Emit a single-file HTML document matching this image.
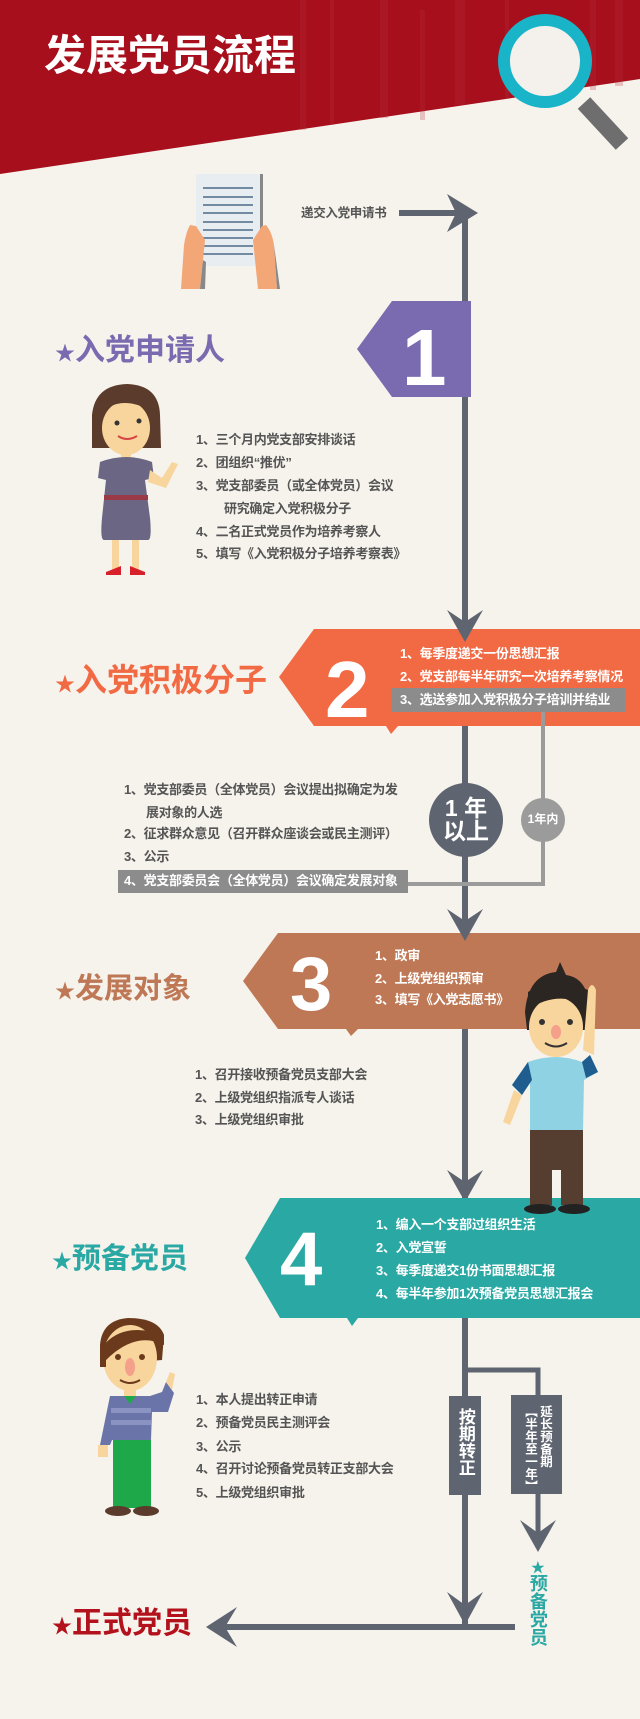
<!DOCTYPE html>
<html><head><meta charset="utf-8">
<style>
html,body{margin:0;padding:0;}
body{width:640px;height:1719px;position:relative;overflow:hidden;background:#f6f2ec;font-family:"Liberation Sans","Noto Sans CJK SC",sans-serif;}
svg{position:absolute;left:0;top:0;}
.t{position:absolute;white-space:nowrap;font-weight:bold;font-size:13px;line-height:16px;color:#555;letter-spacing:-0.3px;}
.w{color:#fff;}
.h{position:absolute;white-space:nowrap;font-weight:bold;line-height:1;}
.box{position:absolute;background:#8c8c8c;}
.v{position:absolute;writing-mode:vertical-rl;font-weight:bold;color:#fff;line-height:1.05;}
</style></head><body>
<svg width="640" height="1719" viewBox="0 0 640 1719">
  <polygon points="0,0 640,0 640,79 0,174" fill="#a70f1c"/>
  <g fill="#b8323c" opacity="0.25">
    <rect x="300" y="0" width="6" height="130"/>
    <rect x="330" y="0" width="4" height="125"/>
    <rect x="380" y="0" width="8" height="118"/>
    <rect x="420" y="10" width="5" height="110"/>
    <rect x="455" y="0" width="10" height="105"/>
    <rect x="505" y="0" width="4" height="98"/>
    <rect x="590" y="0" width="6" height="90"/>
    <rect x="615" y="0" width="8" height="86"/>
  </g>
  <line x1="584" y1="103" x2="622" y2="144" stroke="#6e6e6e" stroke-width="17"/>
  <circle cx="545" cy="61" r="41" fill="#f4f1ec" stroke="#19b4c8" stroke-width="12"/>

  <rect x="196" y="174" width="64" height="92" fill="#e8edf1"/>
  <rect x="260" y="174" width="3" height="60" fill="#888"/>
  <g stroke="#4b6a88" stroke-width="1.6">
    <line x1="203" y1="188" x2="253" y2="188"/><line x1="203" y1="197" x2="253" y2="197"/>
    <line x1="203" y1="205" x2="253" y2="205"/><line x1="203" y1="213" x2="253" y2="213"/>
    <line x1="203" y1="222" x2="253" y2="222"/><line x1="203" y1="230" x2="253" y2="230"/>
    <line x1="203" y1="238" x2="253" y2="238"/><line x1="203" y1="246" x2="253" y2="246"/>
    <line x1="203" y1="254" x2="253" y2="254"/>
  </g>
  <path d="M190,225 Q186,232 184,245 L181,289 L200,289 L203,260 L205,240 Q200,232 196,226 Z" fill="#f3a777"/>
  <path d="M203,260 L200,289 L205,289 L206,262 Z" fill="#888"/>
  <path d="M266,225 Q272,232 274,245 L277,289 L258,289 L255,260 L253,240 Q258,232 262,226 Z" fill="#f3a777"/>
  <path d="M274,245 L280,289 L277,289 Z" fill="#888"/>

  <line x1="465" y1="213" x2="465" y2="1627" stroke="#5e6570" stroke-width="6"/>
  <line x1="399" y1="213" x2="470" y2="213" stroke="#5e6570" stroke-width="6"/>
  <polygon points="478,213 447,194 456,213 447,232" fill="#5e6570"/>

  <polygon points="392,301 471,301 471,397 392,397 357,349" fill="#7a6aaf"/>
  <polygon points="314,629 640,629 640,726 314,726 279,677" fill="#f26a43"/>
  <polygon points="386,726 398,726 391,734" fill="#f26a43"/>
  <polygon points="465,642 447,610 465,622 483,610" fill="#5e6570"/>

  <line x1="543" y1="712" x2="543" y2="886" stroke="#9b9b9b" stroke-width="4"/>
  <line x1="406" y1="884" x2="545" y2="884" stroke="#9b9b9b" stroke-width="4"/>

  <circle cx="466" cy="820" r="37" fill="#5e6570"/>
  <circle cx="543" cy="820" r="22" fill="#9b9b9b"/>

  <polygon points="278,933 640,933 640,1029 278,1029 243,981" fill="#be7855"/>
  <polygon points="346,1029 358,1029 351,1036" fill="#be7855"/>
  <polygon points="465,941 447,909 465,921 483,909" fill="#5e6570"/>

  <polygon points="465,1202 447,1170 465,1182 483,1170" fill="#5e6570"/>
  <polygon points="280,1198 640,1198 640,1318 280,1318 245,1258" fill="#2aa8a3"/>
  <polygon points="347,1318 358,1318 352,1326" fill="#2aa8a3"/>

  <polyline points="465,1370 538,1370 538,1548" fill="none" stroke="#5e6570" stroke-width="5"/>
  <rect x="449" y="1396" width="32" height="99" fill="#5e6570"/>
  <rect x="511" y="1395" width="51" height="99" fill="#5e6570"/>
  <polygon points="538,1552 520,1520 538,1533 556,1520" fill="#5e6570"/>

  <polygon points="465,1625 447,1592 465,1605 483,1592" fill="#5e6570"/>
  <line x1="212" y1="1627" x2="515" y2="1627" stroke="#5e6570" stroke-width="6"/>
  <polygon points="206,1627 237,1607 225,1627 237,1647" fill="#5e6570"/>

  <g>
    <path d="M92,415 Q95,385 127,384 Q159,385 160,415 L161,448 L92,448 Z" fill="#5b3b2b"/>
    <ellipse cx="126" cy="428" rx="24" ry="27" fill="#f8d59c"/>
    <path d="M103,412 Q120,395 150,410 L150,400 Q128,388 103,400 Z" fill="#5b3b2b"/>
    <circle cx="117" cy="423" r="2.5" fill="#333"/><circle cx="139" cy="421" r="2.5" fill="#333"/>
    <path d="M118,436 Q127,442 137,436" stroke="#d84545" stroke-width="2" fill="none"/>
    <rect x="121" y="452" width="10" height="8" fill="#f8d59c"/>
    <path d="M100,462 Q126,452 152,462 L154,478 L145,480 L150,518 Q152,540 148,540 L104,540 Q100,540 102,518 L106,480 L98,478 Z" fill="#6a6683"/>
    <rect x="104" y="495" width="44" height="5" fill="#9a3a46"/>
    <path d="M150,470 L162,478 L172,462 L178,464 L166,488 L148,482 Z" fill="#f8d59c"/>
    <rect x="112" y="540" width="7" height="30" fill="#f8d59c"/><rect x="132" y="540" width="7" height="30" fill="#f8d59c"/>
    <path d="M106,572 L121,566 L121,575 L106,575 Z" fill="#d8202a"/><path d="M130,566 L145,572 L145,575 L130,575 Z" fill="#d8202a"/>
  </g>

  <g>
    <path d="M525,1012 Q528,975 556,972 L560,962 L566,975 Q588,978 590,1010 L588,1030 L527,1030 Z" fill="#2c2622"/>
    <ellipse cx="556" cy="1027" rx="27" ry="30" fill="#f8d59c"/>
    <path d="M528,1010 Q555,990 588,1005 L588,990 Q556,975 528,992 Z" fill="#2c2622"/>
    <circle cx="542" cy="1022" r="3" fill="#333"/><circle cx="570" cy="1022" r="3" fill="#333"/>
    <ellipse cx="556" cy="1032" rx="5" ry="7" fill="#f5a08a"/>
    <path d="M545,1043 Q556,1050 567,1043" stroke="#333" stroke-width="2" fill="none"/>
    <path d="M583,1050 L588,990 Q592,980 596,990 L594,1055 Z" fill="#f8d59c"/>
    <path d="M528,1062 Q556,1052 582,1062 L590,1055 L598,1072 L584,1080 L583,1130 L530,1130 L530,1082 L522,1095 L512,1085 Z" fill="#8fd2e4"/>
    <path d="M582,1062 L590,1055 L598,1072 L586,1078 Z" fill="#1f5d8e"/>
    <path d="M528,1062 L512,1085 L522,1095 L532,1080 Z" fill="#1f5d8e"/>
    <path d="M514,1090 L522,1095 L510,1125 L503,1122 Z" fill="#f8d59c"/>
    <rect x="530" y="1130" width="53" height="40" fill="#553d2f"/>
    <rect x="530" y="1168" width="22" height="37" fill="#553d2f"/><rect x="561" y="1168" width="22" height="37" fill="#553d2f"/>
    <ellipse cx="540" cy="1209" rx="16" ry="5" fill="#222"/><ellipse cx="574" cy="1209" rx="16" ry="5" fill="#222"/>
  </g>

  <g>
    <path d="M100,1345 Q102,1320 128,1318 Q158,1318 164,1335 L162,1360 L100,1365 Z" fill="#6b3a1c"/>
    <ellipse cx="130" cy="1358" rx="27" ry="33" fill="#f8d59c"/>
    <path d="M100,1350 Q120,1320 164,1335 L164,1345 Q135,1330 104,1362 Z" fill="#6b3a1c"/>
    <rect x="100" y="1345" width="6" height="22" fill="#6b3a1c"/>
    <circle cx="118" cy="1357" r="3" fill="#6b3a1c"/><circle cx="142" cy="1357" r="3" fill="#6b3a1c"/>
    <ellipse cx="130" cy="1367" rx="5" ry="9" fill="#f5a08a"/>
    <path d="M120,1380 Q130,1386 140,1380" stroke="#6b3a1c" stroke-width="2" fill="none"/>
    <rect x="124" y="1388" width="12" height="8" fill="#f8d59c"/>
    <path d="M110,1396 L150,1396 L162,1392 L166,1382 L174,1393 L168,1412 L152,1412 L151,1440 L112,1440 L110,1445 L100,1445 Z" fill="#6b74a8"/>
    <rect x="111" y="1408" width="40" height="5" fill="#8a93c2"/><rect x="111" y="1420" width="40" height="5" fill="#8a93c2"/>
    <path d="M124,1396 L136,1396 L130,1404 Z" fill="#1fa84a"/>
    <path d="M166,1382 L170,1372 L175,1374 L172,1390 Z" fill="#f8d59c"/>
    <rect x="98" y="1445" width="10" height="12" fill="#f8d59c"/>
    <rect x="113" y="1440" width="38" height="68" fill="#1fa84a"/>
    <ellipse cx="118" cy="1511" rx="13" ry="5" fill="#5b3b2b"/><ellipse cx="146" cy="1511" rx="13" ry="5" fill="#5b3b2b"/>
  </g>
</svg>

<div class="h" style="left:44px;top:35px;font-size:42px;color:#fff;">发展党员流程</div>
<div class="t" style="left:301px;top:205px;font-size:12.5px;">递交入党申请书</div>

<div class="h" style="left:402px;top:318px;font-size:80px;color:#fff;">1</div>
<div class="h" style="left:55px;top:336px;font-size:30px;color:#7a6aaf;"><span style="font-size:20px;">★</span>入党申请人</div>
<div class="t" style="left:196px;top:432px;">1、三个月内党支部安排谈话</div>
<div class="t" style="left:196px;top:455px;">2、团组织“推优”</div>
<div class="t" style="left:196px;top:478px;">3、党支部委员（或全体党员）会议</div>
<div class="t" style="left:224px;top:501px;">研究确定入党积极分子</div>
<div class="t" style="left:196px;top:524px;">4、二名正式党员作为培养考察人</div>
<div class="t" style="left:196px;top:546px;">5、填写《入党积极分子培养考察表》</div>

<div class="h" style="left:325px;top:650px;font-size:80px;color:#fff;">2</div>
<div class="h" style="left:55px;top:664px;font-size:32px;color:#f26a43;"><span style="font-size:20px;">★</span>入党积极分子</div>
<div class="t w" style="left:400px;top:646px;">1、每季度递交一份思想汇报</div>
<div class="t w" style="left:400px;top:669px;">2、党支部每半年研究一次培养考察情况</div>
<div class="box" style="left:391px;top:688px;width:234px;height:24px;"></div>
<div class="t w" style="left:400px;top:692px;">3、选送参加入党积极分子培训并结业</div>

<div class="t" style="left:124px;top:782px;">1、党支部委员（全体党员）会议提出拟确定为发</div>
<div class="t" style="left:146px;top:805px;">展对象的人选</div>
<div class="t" style="left:124px;top:826px;">2、征求群众意见（召开群众座谈会或民主测评）</div>
<div class="t" style="left:124px;top:849px;">3、公示</div>
<div class="box" style="left:118px;top:870px;width:290px;height:23px;"></div>
<div class="t w" style="left:124px;top:873px;">4、党支部委员会（全体党员）会议确定发展对象</div>

<div class="h" style="left:443px;top:797px;font-size:23px;color:#fff;line-height:23px;text-align:center;width:46px;">1 年<br>以上</div>
<div class="h" style="left:523px;top:813px;font-size:12px;color:#fff;width:40px;text-align:center;">1年内</div>

<div class="h" style="left:290px;top:947px;font-size:76px;color:#fff;">3</div>
<div class="h" style="left:55px;top:975px;font-size:29px;color:#be7855;"><span style="font-size:20px;">★</span>发展对象</div>
<div class="t w" style="left:375px;top:948px;">1、政审</div>
<div class="t w" style="left:375px;top:971px;">2、上级党组织预审</div>
<div class="t w" style="left:375px;top:992px;">3、填写《入党志愿书》</div>

<div class="t" style="left:195px;top:1067px;">1、召开接收预备党员支部大会</div>
<div class="t" style="left:195px;top:1090px;">2、上级党组织指派专人谈话</div>
<div class="t" style="left:195px;top:1112px;">3、上级党组织审批</div>

<div class="h" style="left:280px;top:1222px;font-size:76px;color:#fff;">4</div>
<div class="h" style="left:52px;top:1245px;font-size:29px;color:#2aa8a3;"><span style="font-size:20px;">★</span>预备党员</div>
<div class="t w" style="left:376px;top:1217px;">1、编入一个支部过组织生活</div>
<div class="t w" style="left:376px;top:1240px;">2、入党宣誓</div>
<div class="t w" style="left:376px;top:1263px;">3、每季度递交1份书面思想汇报</div>
<div class="t w" style="left:376px;top:1286px;">4、每半年参加1次预备党员思想汇报会</div>

<div class="t" style="left:196px;top:1392px;">1、本人提出转正申请</div>
<div class="t" style="left:196px;top:1415px;">2、预备党员民主测评会</div>
<div class="t" style="left:196px;top:1439px;">3、公示</div>
<div class="t" style="left:196px;top:1461px;">4、召开讨论预备党员转正支部大会</div>
<div class="t" style="left:196px;top:1485px;">5、上级党组织审批</div>

<div class="v" style="left:456px;top:1408px;font-size:17px;">按期转正</div>
<div class="v" style="left:522px;top:1405px;font-size:12.5px;line-height:15px;">延长预备期<br>【半年至一年】</div>

<div class="v" style="left:528px;top:1560px;font-size:18px;color:#2aa8a3;"><span style="font-size:14px;">★</span>预备党员</div>

<div class="h" style="left:52px;top:1609px;font-size:30px;color:#b3111b;"><span style="font-size:20px;">★</span>正式党员</div>
</body></html>
